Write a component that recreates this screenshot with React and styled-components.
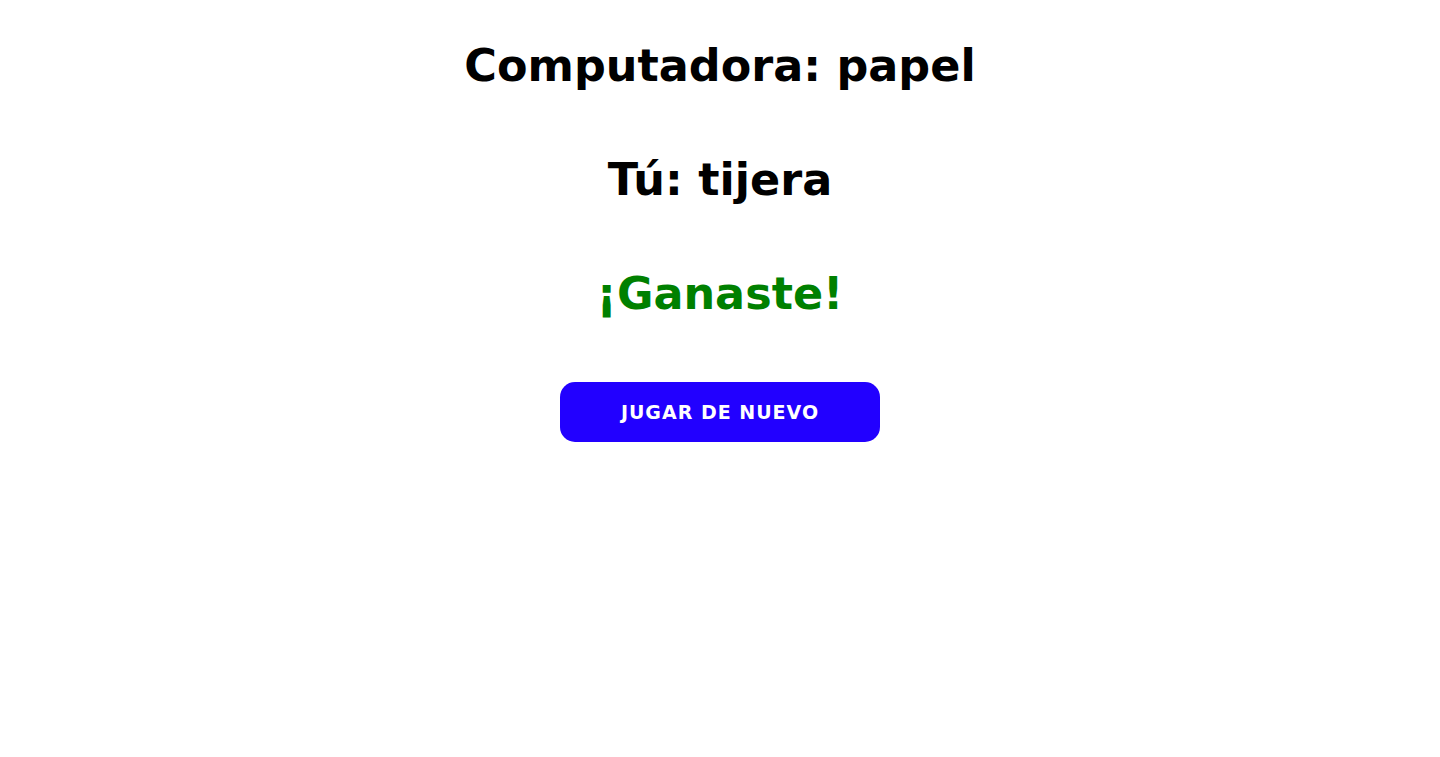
import React from "react";
import styled, { createGlobalStyle } from "styled-components";

const Global = createGlobalStyle`
  html, body { margin: 0; padding: 0; background: #fff; }
  body { font-family: "DejaVu Sans", Verdana, sans-serif; }
`;

const Page = styled.main`
  display: flex;
  flex-direction: column;
  align-items: center;
  padding-top: 9px;
`;

const Line = styled.h1`
  margin: 0;
  font-size: 44.5px;
  font-weight: 700;
  line-height: 114px;
  color: ${(p) => p.$color || "#000"};
`;

const Button = styled.button`
  margin-top: 31px;
  width: 320px;
  height: 60px;
  border: none;
  border-radius: 15px;
  background: #2200ff;
  color: #fff;
  font-family: "DejaVu Sans", Verdana, sans-serif;
  font-weight: 700;
  font-size: 19px;
  letter-spacing: 1px;
  cursor: pointer;
`;

export default function App() {
  return (
    <>
      <Global />
      <Page>
        <Line>Computadora: papel</Line>
        <Line>Tú: tijera</Line>
        <Line $color="#008000">¡Ganaste!</Line>
        <Button>JUGAR DE NUEVO</Button>
      </Page>
    </>
  );
}
